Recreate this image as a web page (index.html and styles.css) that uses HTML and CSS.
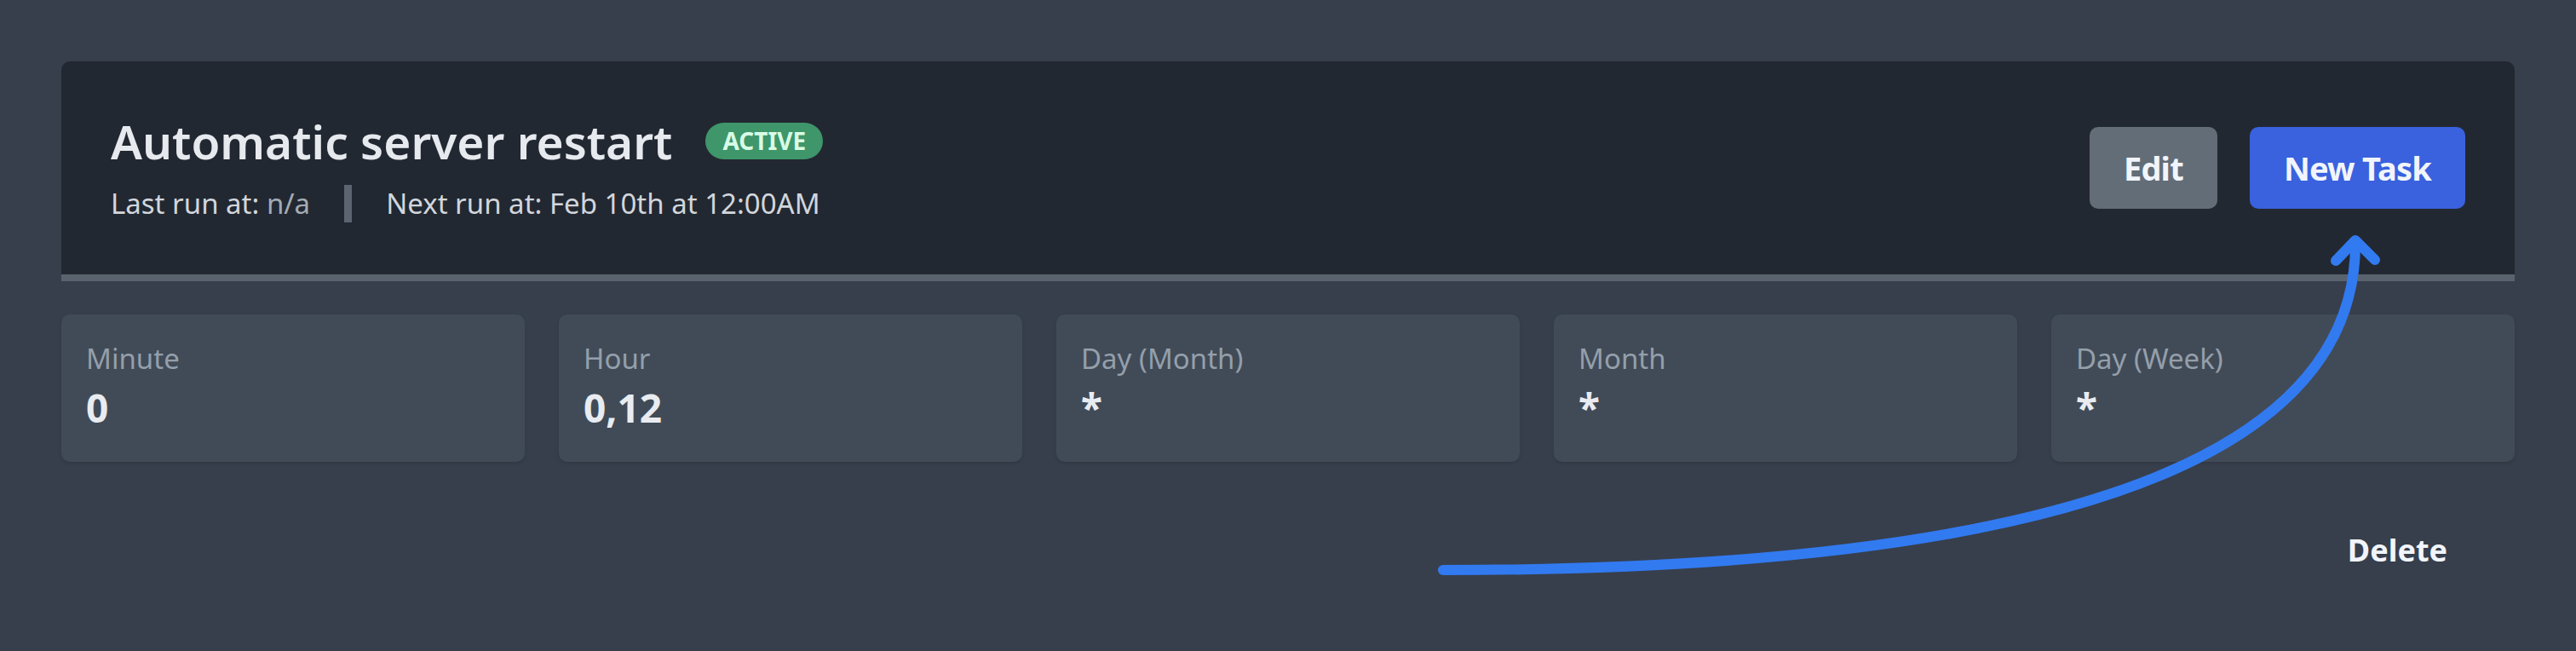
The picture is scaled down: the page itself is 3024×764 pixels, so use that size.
FILE: index.html
```html
<!DOCTYPE html>
<html lang="en">
<head>
<meta charset="utf-8">
<title>Schedule</title>
<link rel="stylesheet" href="styles.css">
</head>
<body>
<div class="page">
  <section class="schedule">
    <header class="schedule-head">
      <div class="head-info">
        <div class="title-row">
          <h1 class="title">Automatic server restart</h1>
          <span class="badge">Active</span>
        </div>
        <div class="runs">
          <span class="run">Last run at: <span class="muted">n/a</span></span>
          <span class="sep"></span>
          <span class="run">Next run at: Feb 10th at 12:00AM</span>
        </div>
      </div>
      <div class="head-actions">
        <button class="btn btn-gray">Edit</button>
        <button class="btn btn-blue">New Task</button>
      </div>
    </header>
    <div class="cron-grid">
      <div class="cron-cell"><div class="cron-label">Minute</div><div class="cron-value">0</div></div>
      <div class="cron-cell"><div class="cron-label">Hour</div><div class="cron-value">0,12</div></div>
      <div class="cron-cell"><div class="cron-label">Day (Month)</div><div class="cron-value">*</div></div>
      <div class="cron-cell"><div class="cron-label">Month</div><div class="cron-value">*</div></div>
      <div class="cron-cell"><div class="cron-label">Day (Week)</div><div class="cron-value">*</div></div>
    </div>
    <div class="footer-actions">
      <button class="btn btn-link">Delete</button>
    </div>
  </section>
  <svg class="annotation" viewBox="0 0 3024 764" width="3024" height="764" aria-hidden="true">
    <path d="M1694 669 C2350 669 2765 560 2765 286" fill="none" stroke="#327af0" stroke-width="12" stroke-linecap="round"/>
    <polyline points="2742,306 2765,282 2788,305" fill="none" stroke="#327af0" stroke-width="12" stroke-linecap="round" stroke-linejoin="round"/>
  </svg>
</div>
</body>
</html>
```

FILE: styles.css
```css
* { box-sizing: border-box; }
body {
  margin: 0;
  background: #373f4c;
  font-family: "Noto Sans", "Open Sans", sans-serif;
  color: #e6e9ee;
}
.page {
  position: relative;
  min-height: 764px;
  padding: 72px;
}
.schedule-head {
  display: flex;
  align-items: center;
  justify-content: space-between;
  height: 258px;
  padding: 0 58px;
  background: #222831;
  border-bottom: 8px solid #58636e;
  border-radius: 10px 10px 0 0;
}
.head-info {
  display: flex;
  flex-direction: column;
  gap: 19px;
}
.title-row {
  display: flex;
  align-items: center;
}
.title {
  margin: 0;
  font-size: 55px;
  font-weight: 600;
  line-height: 64px;
  color: #e6e9ee;
}
.badge {
  margin-left: 39px;
  height: 43px;
  padding: 0 20px;
  border-radius: 22px;
  background: #3e966a;
  color: #d8fbe6;
  font-size: 28px;
  font-weight: 700;
  line-height: 43px;
  text-transform: uppercase;
}
.runs {
  display: flex;
  align-items: center;
  font-size: 33px;
  line-height: 44px;
  color: #d2d6dc;
}
.muted { color: #a4abb5; }
.sep {
  width: 9px;
  height: 44px;
  margin: 0 40px;
  background: #5b6470;
}
.head-actions {
  display: flex;
  gap: 38px;
}
.btn {
  height: 96px;
  padding: 0 40px;
  border: 0;
  border-radius: 10px;
  font-family: inherit;
  font-size: 38px;
  font-weight: 700;
  letter-spacing: -0.8px;
  line-height: 96px;
  color: #f1f5fb;
}
.btn-gray { background: #636d77; }
.btn-blue { background: #3a61de; }
.btn-link {
  background: transparent;
  font-size: 36px;
  letter-spacing: 0;
  padding: 0 41px;
}
.cron-grid {
  display: grid;
  grid-template-columns: repeat(5, 1fr);
  gap: 40px;
  margin-top: 39px;
}
.cron-cell {
  padding: 30px 29px 34px;
  background: #414b57;
  border-radius: 10px;
  box-shadow: 0 2px 4px rgba(0, 0, 0, 0.12);
}
.cron-label {
  font-size: 33px;
  line-height: 44px;
  color: #949fab;
}
.cron-value {
  margin-top: 5px;
  font-size: 46px;
  font-weight: 700;
  line-height: 60px;
  color: #e8ecf1;
}
.footer-actions {
  display: flex;
  justify-content: flex-end;
  margin-top: 56px;
  padding-right: 38px;
}
.annotation {
  position: absolute;
  top: 0;
  left: 0;
  pointer-events: none;
}
```
